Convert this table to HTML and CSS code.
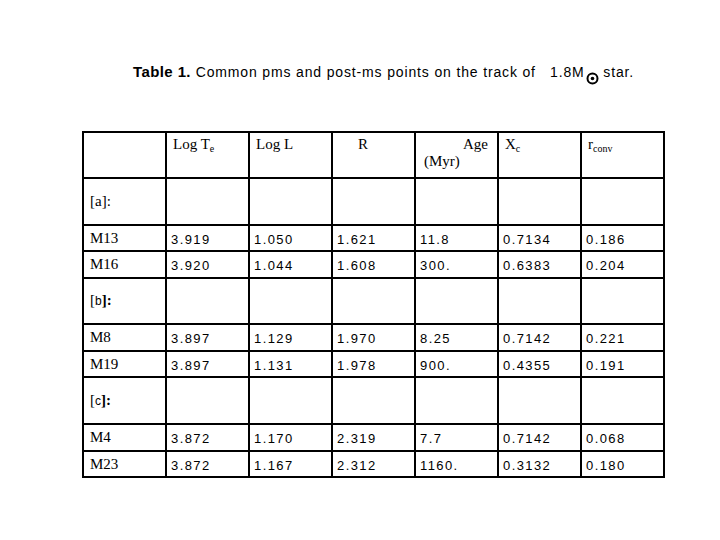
FILE: index.html
```html
<!DOCTYPE html>
<html>
<head>
<meta charset="utf-8">
<link rel="stylesheet" href="styles.css">
</head>
<body>
<div class="page">
  <p class="title"><b>Table 1.</b> Common pms and post-ms points on the track of &nbsp;&nbsp;1.8M<span class="sun"><svg width="13" height="13" viewBox="0 0 13 13"><circle cx="6.5" cy="6.5" r="5" fill="none" stroke="#000" stroke-width="2"/><circle cx="6.5" cy="6.5" r="1.8" fill="#000"/></svg></span> star.</p>
  <table class="data">
    <colgroup>
      <col class="c"><col class="c"><col class="c"><col class="c"><col class="c"><col class="c"><col class="c">
    </colgroup>
    <tr class="head">
      <td></td>
      <td>Log T<sub>e</sub></td>
      <td>Log L</td>
      <td class="rcol">R</td>
      <td class="agecol"><div class="age">Age</div><div>(Myr)</div></td>
      <td>X<sub>c</sub></td>
      <td>r<sub>conv</sub></td>
    </tr>
    <tr class="grp"><td class="lbl">[a]:</td><td></td><td></td><td></td><td></td><td></td><td></td></tr>
    <tr class="r26"><td class="lbl">M13</td><td class="n">3.919</td><td class="n">1.050</td><td class="n">1.621</td><td class="n">11.8</td><td class="n">0.7134</td><td class="n">0.186</td></tr>
    <tr class="r27"><td class="lbl">M16</td><td class="n">3.920</td><td class="n">1.044</td><td class="n">1.608</td><td class="n">300.</td><td class="n">0.6383</td><td class="n">0.204</td></tr>
    <tr class="grp2"><td class="lbl">[<span class="sl">b</span><b>]:</b></td><td></td><td></td><td></td><td></td><td></td><td></td></tr>
    <tr class="r27"><td class="lbl">M8</td><td class="n">3.897</td><td class="n">1.129</td><td class="n">1.970</td><td class="n">8.25</td><td class="n">0.7142</td><td class="n">0.221</td></tr>
    <tr class="r26"><td class="lbl">M19</td><td class="n">3.897</td><td class="n">1.131</td><td class="n">1.978</td><td class="n">900.</td><td class="n">0.4355</td><td class="n">0.191</td></tr>
    <tr class="grp"><td class="lbl">[<span class="sl">c</span><b>]:</b></td><td></td><td></td><td></td><td></td><td></td><td></td></tr>
    <tr class="r27"><td class="lbl">M4</td><td class="n">3.872</td><td class="n">1.170</td><td class="n">2.319</td><td class="n">7.7</td><td class="n">0.7142</td><td class="n">0.068</td></tr>
    <tr class="r26"><td class="lbl">M23</td><td class="n">3.872</td><td class="n">1.167</td><td class="n">2.312</td><td class="n">1160.</td><td class="n">0.3132</td><td class="n">0.180</td></tr>
  </table>
</div>
</body>
</html>
```

FILE: styles.css
```css
html, body {
  margin: 0;
  padding: 0;
  background: #fff;
  color: #000;
}
.page {
  width: 720px;
  height: 540px;
  padding-top: 64px;
  padding-left: 82px;
  box-sizing: border-box;
}
.title {
  margin: 0 0 0 51px;
  height: 16px;
  font-family: "Liberation Sans", Arial, sans-serif;
  font-size: 14px;
  line-height: 16px;
  letter-spacing: 0.85px;
  white-space: nowrap;
}
.title b {
  font-weight: bold;
  font-size: 15px;
  letter-spacing: 0.4px;
}
.sun {
  display: inline-block;
  vertical-align: -8px;
  margin-left: 1px;
  line-height: 0;
}
.data {
  margin-top: 51px;
  border-collapse: collapse;
  table-layout: fixed;
  width: 583px;
  font-family: "Liberation Serif", "Times New Roman", serif;
  font-size: 15px;
  line-height: 17px;
}
.data col.c {
  width: 83px;
}
.data td {
  border: 2px solid #000;
  padding: 0 5px 0 6px;
  vertical-align: middle;
  white-space: nowrap;
  overflow: hidden;
}
.data tr.head td {
  height: 46px;
  vertical-align: top;
  padding-top: 3px;
  box-sizing: border-box;
}
.data tr.grp td {
  height: 47px;
  box-sizing: border-box;
}
.data tr.grp2 td {
  height: 46px;
  box-sizing: border-box;
}
.data tr.r26 td {
  height: 26px;
  box-sizing: border-box;
}
.data tr.r27 td {
  height: 27px;
  box-sizing: border-box;
}
.data sub {
  font-size: 10px;
  vertical-align: -3px;
  line-height: 0;
}
.data td.rcol {
  padding-left: 25px;
}
.data td.agecol {
  padding-left: 8px;
  padding-right: 9px;
}
.age {
  text-align: right;
}
.data td.n {
  font-family: "Liberation Sans", Arial, sans-serif;
  font-size: 13px;
  letter-spacing: 1.4px;
  padding-left: 4px;
  padding-top: 2px;
}
.sl {
  font-family: "Liberation Sans", Arial, sans-serif;
  font-size: 12px;
}
.lbl b {
  font-weight: bold;
}
```
